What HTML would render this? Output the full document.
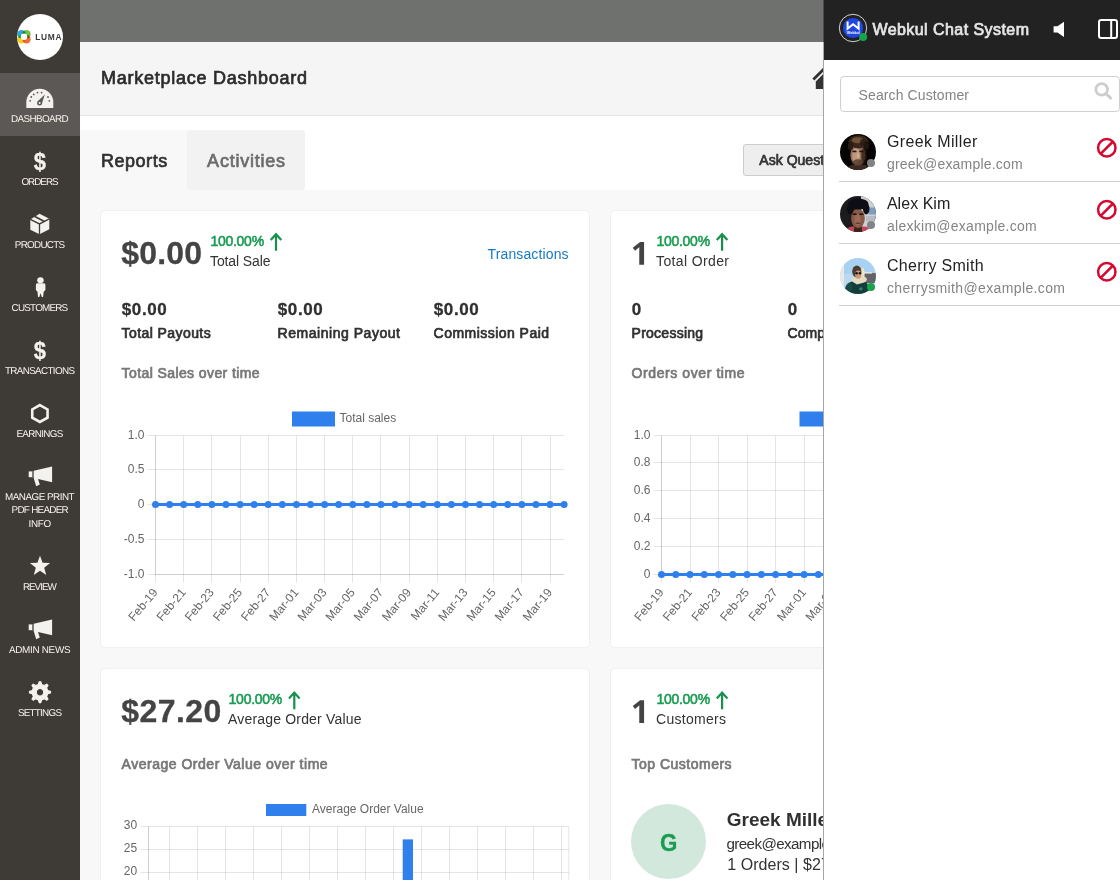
<!DOCTYPE html>
<html lang="en">
<head>
<meta charset="utf-8">
<title>Marketplace Dashboard</title>
<style>
html,body{margin:0;padding:0;}
body{width:1120px;height:880px;overflow:hidden;position:relative;background:#f8f8f8;font-family:"Liberation Sans",sans-serif;}
.layer{position:absolute;left:0;top:0;height:880px;overflow:hidden;}
.abs{position:absolute;}
.t{position:absolute;white-space:pre;line-height:1;font-family:"Liberation Sans",sans-serif;will-change:opacity;}
/* main */
#main{width:1120px;z-index:1;}
.topbar{left:80px;top:0;width:1040px;height:42px;background:#6f716f;}
.pagehead{left:80px;top:42px;width:1040px;height:73px;background:#f5f5f5;border-bottom:1px solid #e4e4e4;}
.whiteband{left:80px;top:116px;width:1040px;height:74px;background:#fff;}
.tab1{left:80px;top:130px;width:107px;height:60px;background:#f8f8f8;}
.tab2{left:187px;top:130px;width:117.5px;height:60px;background:#f2f2f2;border-radius:3px;}
.btn{left:743px;top:144px;width:180px;height:30px;background:#eee;border:1px solid #ccc;border-radius:3px;}
.card{background:#fff;border:1px solid #f0f0f0;border-radius:5px;box-sizing:border-box;}
.avatarG{left:630.75px;top:803.75px;width:75px;height:75px;border-radius:50%;background:#d2e8dd;}
svg.charts{position:absolute;left:0;top:0;will-change:opacity;}
/* sidebar */
#side{width:80px;background:#3e3a36;z-index:2;}
.active{left:0;top:73px;width:80px;height:63px;background:#5c5855;}
.logo{left:17px;top:14px;width:46px;height:46px;border-radius:50%;background:#fff;}
.dollar{will-change:opacity;position:absolute;left:0;width:80px;text-align:center;font-weight:700;font-size:24.4px;line-height:1;color:#f4f2ef;transform:scaleX(0.9);transform-origin:39.9px 0;-webkit-text-stroke:0.3px #f4f2ef;}
/* chat */
#chat{left:824px;width:296px;background:#fff;z-index:3;}
#chat .in{position:absolute;left:-824px;top:0;width:1120px;height:880px;}
.chathead{left:824px;top:0;width:296px;height:60px;background:#222;}
.search{left:840px;top:76px;width:280px;height:36px;border:1px solid #cfcfcf;border-radius:4px;box-sizing:border-box;background:#fff;}
.sep{left:839px;width:281px;height:1px;background:#cfcfcf;}
.av{width:36px;height:36px;border-radius:50%;overflow:hidden;}
.dot{width:8px;height:8px;border-radius:50%;left:867px;background:#838383;}
</style>
</head>
<body>

<!-- ================= MAIN ================= -->
<div class="layer" id="main">
  <div class="abs topbar"></div>
  <div class="abs pagehead"></div>
  <div class="abs whiteband"></div>
  <div class="abs tab1"></div>
  <div class="abs tab2"></div>
  <div class="abs btn"></div>
  <!-- home icon -->
  <svg class="abs" style="left:808px;top:62px" width="40" height="32" viewBox="808 62 40 32">
    <path d="M813.35 79.6 L828 64.95 L842.65 79.6" fill="none" stroke="#333" stroke-width="2.76"/>
    <path d="M815.8 81.5 L828 69.3 L840.2 81.5 V88.9 H815.8 Z" fill="#333"/>
  </svg>
  <div class="abs card" style="left:100px;top:210px;width:490px;height:438px"></div>
  <div class="abs card" style="left:610px;top:210px;width:490px;height:438px"></div>
  <div class="abs card" style="left:100px;top:668px;width:490px;height:438px"></div>
  <div class="abs card" style="left:610px;top:668px;width:490px;height:438px"></div>
  <div class="abs avatarG"></div>
  <!-- green arrows -->
  <svg class="abs" style="left:0;top:0" width="1120" height="880" viewBox="0 0 1120 880">
    <g fill="none" stroke="#17914b" stroke-width="2.2" stroke-linecap="butt" stroke-linejoin="miter">
      <path d="M276.0 250.8 V233.9 M270.7 240.1 L276.0 234.20000000000002 L281.3 240.1"/>
      <path d="M722.1 250.8 V233.9 M716.8000000000001 240.1 L722.1 234.20000000000002 L727.4 240.1"/>
      <path d="M294.3 709.1999999999999 V692.3 M289.0 698.5 L294.3 692.5999999999999 L299.6 698.5"/>
      <path d="M722.1 709.1999999999999 V692.3 M716.8000000000001 698.5 L722.1 692.5999999999999 L727.4 698.5"/>
    </g>
  </svg>
  <svg class="abs" style="left:0;top:0" width="1120" height="880" viewBox="0 0 1120 880"><path fill="#444" d="M644.06 264.75 L639.25 264.75 L639.25 251.53 L639.30 249.36 L639.38 246.98 Q638.17 248.19 637.70 248.56 L635.08 250.67 L632.75 247.77 L640.11 241.91 L644.08 241.91 L644.08 264.75 Z"/><path fill="#444" d="M644.06 723.00 L639.25 723.00 L639.25 709.78 L639.30 707.61 L639.38 705.23 Q638.17 706.44 637.70 706.81 L635.08 708.92 L632.75 706.02 L640.11 700.16 L644.08 700.16 L644.08 723.00 Z"/></svg>
  <svg class="charts" width="1120" height="880" viewBox="0 0 1120 880" font-family="Liberation Sans, sans-serif" font-size="12" fill="#666">
<line x1="147.50" y1="435.50" x2="564.10" y2="435.50" stroke="rgba(0,0,0,0.1)" stroke-width="1"/>
<text x="144.50" y="438.86" text-anchor="end">1.0</text>
<line x1="147.50" y1="469.50" x2="564.10" y2="469.50" stroke="rgba(0,0,0,0.1)" stroke-width="1"/>
<text x="144.50" y="472.86" text-anchor="end">0.5</text>
<line x1="147.50" y1="504.50" x2="564.10" y2="504.50" stroke="rgba(0,0,0,0.1)" stroke-width="1"/>
<text x="144.50" y="507.86" text-anchor="end">0</text>
<line x1="147.50" y1="539.50" x2="564.10" y2="539.50" stroke="rgba(0,0,0,0.1)" stroke-width="1"/>
<text x="144.50" y="542.86" text-anchor="end">-0.5</text>
<line x1="147.50" y1="574.50" x2="564.10" y2="574.50" stroke="rgba(0,0,0,0.1)" stroke-width="1"/>
<text x="144.50" y="577.86" text-anchor="end">-1.0</text>
<line x1="155.50" y1="435.50" x2="155.50" y2="582.50" stroke="rgba(0,0,0,0.1)" stroke-width="1"/>
<line x1="183.50" y1="435.50" x2="183.50" y2="582.50" stroke="rgba(0,0,0,0.1)" stroke-width="1"/>
<line x1="211.50" y1="435.50" x2="211.50" y2="582.50" stroke="rgba(0,0,0,0.1)" stroke-width="1"/>
<line x1="240.50" y1="435.50" x2="240.50" y2="582.50" stroke="rgba(0,0,0,0.1)" stroke-width="1"/>
<line x1="268.50" y1="435.50" x2="268.50" y2="582.50" stroke="rgba(0,0,0,0.1)" stroke-width="1"/>
<line x1="296.50" y1="435.50" x2="296.50" y2="582.50" stroke="rgba(0,0,0,0.1)" stroke-width="1"/>
<line x1="324.50" y1="435.50" x2="324.50" y2="582.50" stroke="rgba(0,0,0,0.1)" stroke-width="1"/>
<line x1="352.50" y1="435.50" x2="352.50" y2="582.50" stroke="rgba(0,0,0,0.1)" stroke-width="1"/>
<line x1="380.50" y1="435.50" x2="380.50" y2="582.50" stroke="rgba(0,0,0,0.1)" stroke-width="1"/>
<line x1="409.50" y1="435.50" x2="409.50" y2="582.50" stroke="rgba(0,0,0,0.1)" stroke-width="1"/>
<line x1="437.50" y1="435.50" x2="437.50" y2="582.50" stroke="rgba(0,0,0,0.1)" stroke-width="1"/>
<line x1="465.50" y1="435.50" x2="465.50" y2="582.50" stroke="rgba(0,0,0,0.1)" stroke-width="1"/>
<line x1="493.50" y1="435.50" x2="493.50" y2="582.50" stroke="rgba(0,0,0,0.1)" stroke-width="1"/>
<line x1="521.50" y1="435.50" x2="521.50" y2="582.50" stroke="rgba(0,0,0,0.1)" stroke-width="1"/>
<line x1="550.50" y1="435.50" x2="550.50" y2="582.50" stroke="rgba(0,0,0,0.1)" stroke-width="1"/>
<line x1="155.50" y1="435.50" x2="155.50" y2="574.50" stroke="rgba(0,0,0,0.1)" stroke-width="1"/>
<line x1="155.50" y1="574.50" x2="564.10" y2="574.50" stroke="rgba(0,0,0,0.1)" stroke-width="1"/>
<line x1="155.50" y1="504.50" x2="564.10" y2="504.50" stroke="rgba(0,0,0,0.25)" stroke-width="1"/>
<line x1="155.50" y1="504.50" x2="564.10" y2="504.50" stroke="#2f80ed" stroke-width="3"/>
<circle cx="155.50" cy="504.50" r="3.5" fill="#2f80ed"/>
<circle cx="169.59" cy="504.50" r="3.5" fill="#2f80ed"/>
<circle cx="183.68" cy="504.50" r="3.5" fill="#2f80ed"/>
<circle cx="197.77" cy="504.50" r="3.5" fill="#2f80ed"/>
<circle cx="211.86" cy="504.50" r="3.5" fill="#2f80ed"/>
<circle cx="225.95" cy="504.50" r="3.5" fill="#2f80ed"/>
<circle cx="240.04" cy="504.50" r="3.5" fill="#2f80ed"/>
<circle cx="254.13" cy="504.50" r="3.5" fill="#2f80ed"/>
<circle cx="268.22" cy="504.50" r="3.5" fill="#2f80ed"/>
<circle cx="282.31" cy="504.50" r="3.5" fill="#2f80ed"/>
<circle cx="296.40" cy="504.50" r="3.5" fill="#2f80ed"/>
<circle cx="310.49" cy="504.50" r="3.5" fill="#2f80ed"/>
<circle cx="324.58" cy="504.50" r="3.5" fill="#2f80ed"/>
<circle cx="338.67" cy="504.50" r="3.5" fill="#2f80ed"/>
<circle cx="352.76" cy="504.50" r="3.5" fill="#2f80ed"/>
<circle cx="366.84" cy="504.50" r="3.5" fill="#2f80ed"/>
<circle cx="380.93" cy="504.50" r="3.5" fill="#2f80ed"/>
<circle cx="395.02" cy="504.50" r="3.5" fill="#2f80ed"/>
<circle cx="409.11" cy="504.50" r="3.5" fill="#2f80ed"/>
<circle cx="423.20" cy="504.50" r="3.5" fill="#2f80ed"/>
<circle cx="437.29" cy="504.50" r="3.5" fill="#2f80ed"/>
<circle cx="451.38" cy="504.50" r="3.5" fill="#2f80ed"/>
<circle cx="465.47" cy="504.50" r="3.5" fill="#2f80ed"/>
<circle cx="479.56" cy="504.50" r="3.5" fill="#2f80ed"/>
<circle cx="493.65" cy="504.50" r="3.5" fill="#2f80ed"/>
<circle cx="507.74" cy="504.50" r="3.5" fill="#2f80ed"/>
<circle cx="521.83" cy="504.50" r="3.5" fill="#2f80ed"/>
<circle cx="535.92" cy="504.50" r="3.5" fill="#2f80ed"/>
<circle cx="550.01" cy="504.50" r="3.5" fill="#2f80ed"/>
<circle cx="564.10" cy="504.50" r="3.5" fill="#2f80ed"/>
<text transform="translate(155.10 590.00) rotate(-50)" x="0" y="4.16" text-anchor="end">Feb-19</text>
<text transform="translate(183.28 590.00) rotate(-50)" x="0" y="4.16" text-anchor="end">Feb-21</text>
<text transform="translate(211.46 590.00) rotate(-50)" x="0" y="4.16" text-anchor="end">Feb-23</text>
<text transform="translate(239.64 590.00) rotate(-50)" x="0" y="4.16" text-anchor="end">Feb-25</text>
<text transform="translate(267.82 590.00) rotate(-50)" x="0" y="4.16" text-anchor="end">Feb-27</text>
<text transform="translate(296.00 590.00) rotate(-50)" x="0" y="4.16" text-anchor="end">Mar-01</text>
<text transform="translate(324.18 590.00) rotate(-50)" x="0" y="4.16" text-anchor="end">Mar-03</text>
<text transform="translate(352.36 590.00) rotate(-50)" x="0" y="4.16" text-anchor="end">Mar-05</text>
<text transform="translate(380.53 590.00) rotate(-50)" x="0" y="4.16" text-anchor="end">Mar-07</text>
<text transform="translate(408.71 590.00) rotate(-50)" x="0" y="4.16" text-anchor="end">Mar-09</text>
<text transform="translate(436.89 590.00) rotate(-50)" x="0" y="4.16" text-anchor="end">Mar-11</text>
<text transform="translate(465.07 590.00) rotate(-50)" x="0" y="4.16" text-anchor="end">Mar-13</text>
<text transform="translate(493.25 590.00) rotate(-50)" x="0" y="4.16" text-anchor="end">Mar-15</text>
<text transform="translate(521.43 590.00) rotate(-50)" x="0" y="4.16" text-anchor="end">Mar-17</text>
<text transform="translate(549.61 590.00) rotate(-50)" x="0" y="4.16" text-anchor="end">Mar-19</text>
<rect x="292.00" y="411.5" width="43" height="15" fill="#2f80ed"/>
<text x="339.50" y="422.36" text-anchor="start">Total sales</text>
<line x1="653.50" y1="435.50" x2="1075.00" y2="435.50" stroke="rgba(0,0,0,0.1)" stroke-width="1"/>
<text x="650.50" y="438.86" text-anchor="end">1.0</text>
<line x1="653.50" y1="462.50" x2="1075.00" y2="462.50" stroke="rgba(0,0,0,0.1)" stroke-width="1"/>
<text x="650.50" y="465.86" text-anchor="end">0.8</text>
<line x1="653.50" y1="490.50" x2="1075.00" y2="490.50" stroke="rgba(0,0,0,0.1)" stroke-width="1"/>
<text x="650.50" y="493.86" text-anchor="end">0.6</text>
<line x1="653.50" y1="518.50" x2="1075.00" y2="518.50" stroke="rgba(0,0,0,0.1)" stroke-width="1"/>
<text x="650.50" y="521.86" text-anchor="end">0.4</text>
<line x1="653.50" y1="546.50" x2="1075.00" y2="546.50" stroke="rgba(0,0,0,0.1)" stroke-width="1"/>
<text x="650.50" y="549.86" text-anchor="end">0.2</text>
<line x1="653.50" y1="574.50" x2="1075.00" y2="574.50" stroke="rgba(0,0,0,0.1)" stroke-width="1"/>
<text x="650.50" y="577.86" text-anchor="end">0</text>
<line x1="661.50" y1="435.50" x2="661.50" y2="582.50" stroke="rgba(0,0,0,0.1)" stroke-width="1"/>
<line x1="690.50" y1="435.50" x2="690.50" y2="582.50" stroke="rgba(0,0,0,0.1)" stroke-width="1"/>
<line x1="718.50" y1="435.50" x2="718.50" y2="582.50" stroke="rgba(0,0,0,0.1)" stroke-width="1"/>
<line x1="747.50" y1="435.50" x2="747.50" y2="582.50" stroke="rgba(0,0,0,0.1)" stroke-width="1"/>
<line x1="775.50" y1="435.50" x2="775.50" y2="582.50" stroke="rgba(0,0,0,0.1)" stroke-width="1"/>
<line x1="804.50" y1="435.50" x2="804.50" y2="582.50" stroke="rgba(0,0,0,0.1)" stroke-width="1"/>
<line x1="832.50" y1="435.50" x2="832.50" y2="582.50" stroke="rgba(0,0,0,0.1)" stroke-width="1"/>
<line x1="861.50" y1="435.50" x2="861.50" y2="582.50" stroke="rgba(0,0,0,0.1)" stroke-width="1"/>
<line x1="889.50" y1="435.50" x2="889.50" y2="582.50" stroke="rgba(0,0,0,0.1)" stroke-width="1"/>
<line x1="918.50" y1="435.50" x2="918.50" y2="582.50" stroke="rgba(0,0,0,0.1)" stroke-width="1"/>
<line x1="946.50" y1="435.50" x2="946.50" y2="582.50" stroke="rgba(0,0,0,0.1)" stroke-width="1"/>
<line x1="975.50" y1="435.50" x2="975.50" y2="582.50" stroke="rgba(0,0,0,0.1)" stroke-width="1"/>
<line x1="1003.50" y1="435.50" x2="1003.50" y2="582.50" stroke="rgba(0,0,0,0.1)" stroke-width="1"/>
<line x1="1032.50" y1="435.50" x2="1032.50" y2="582.50" stroke="rgba(0,0,0,0.1)" stroke-width="1"/>
<line x1="1060.50" y1="435.50" x2="1060.50" y2="582.50" stroke="rgba(0,0,0,0.1)" stroke-width="1"/>
<line x1="661.50" y1="435.50" x2="661.50" y2="574.50" stroke="rgba(0,0,0,0.1)" stroke-width="1"/>
<line x1="661.50" y1="574.50" x2="1075.00" y2="574.50" stroke="rgba(0,0,0,0.1)" stroke-width="1"/>
<line x1="661.50" y1="574.50" x2="1075.00" y2="574.50" stroke="rgba(0,0,0,0.25)" stroke-width="1"/>
<line x1="661.50" y1="574.50" x2="1075.00" y2="574.50" stroke="#2f80ed" stroke-width="3"/>
<circle cx="661.50" cy="574.50" r="3.5" fill="#2f80ed"/>
<circle cx="675.76" cy="574.50" r="3.5" fill="#2f80ed"/>
<circle cx="690.02" cy="574.50" r="3.5" fill="#2f80ed"/>
<circle cx="704.28" cy="574.50" r="3.5" fill="#2f80ed"/>
<circle cx="718.53" cy="574.50" r="3.5" fill="#2f80ed"/>
<circle cx="732.79" cy="574.50" r="3.5" fill="#2f80ed"/>
<circle cx="747.05" cy="574.50" r="3.5" fill="#2f80ed"/>
<circle cx="761.31" cy="574.50" r="3.5" fill="#2f80ed"/>
<circle cx="775.57" cy="574.50" r="3.5" fill="#2f80ed"/>
<circle cx="789.83" cy="574.50" r="3.5" fill="#2f80ed"/>
<circle cx="804.09" cy="574.50" r="3.5" fill="#2f80ed"/>
<circle cx="818.34" cy="574.50" r="3.5" fill="#2f80ed"/>
<circle cx="832.60" cy="574.50" r="3.5" fill="#2f80ed"/>
<circle cx="846.86" cy="574.50" r="3.5" fill="#2f80ed"/>
<circle cx="861.12" cy="574.50" r="3.5" fill="#2f80ed"/>
<circle cx="875.38" cy="574.50" r="3.5" fill="#2f80ed"/>
<circle cx="889.64" cy="574.50" r="3.5" fill="#2f80ed"/>
<circle cx="903.90" cy="574.50" r="3.5" fill="#2f80ed"/>
<circle cx="918.16" cy="574.50" r="3.5" fill="#2f80ed"/>
<circle cx="932.41" cy="574.50" r="3.5" fill="#2f80ed"/>
<circle cx="946.67" cy="574.50" r="3.5" fill="#2f80ed"/>
<circle cx="960.93" cy="574.50" r="3.5" fill="#2f80ed"/>
<circle cx="975.19" cy="574.50" r="3.5" fill="#2f80ed"/>
<circle cx="989.45" cy="574.50" r="3.5" fill="#2f80ed"/>
<circle cx="1003.71" cy="574.50" r="3.5" fill="#2f80ed"/>
<circle cx="1017.97" cy="574.50" r="3.5" fill="#2f80ed"/>
<circle cx="1032.22" cy="574.50" r="3.5" fill="#2f80ed"/>
<circle cx="1046.48" cy="574.50" r="3.5" fill="#2f80ed"/>
<circle cx="1060.74" cy="574.50" r="3.5" fill="#2f80ed"/>
<circle cx="1075.00" cy="574.50" r="3.5" fill="#2f80ed"/>
<text transform="translate(661.10 590.00) rotate(-50)" x="0" y="4.16" text-anchor="end">Feb-19</text>
<text transform="translate(689.62 590.00) rotate(-50)" x="0" y="4.16" text-anchor="end">Feb-21</text>
<text transform="translate(718.13 590.00) rotate(-50)" x="0" y="4.16" text-anchor="end">Feb-23</text>
<text transform="translate(746.65 590.00) rotate(-50)" x="0" y="4.16" text-anchor="end">Feb-25</text>
<text transform="translate(775.17 590.00) rotate(-50)" x="0" y="4.16" text-anchor="end">Feb-27</text>
<text transform="translate(803.69 590.00) rotate(-50)" x="0" y="4.16" text-anchor="end">Mar-01</text>
<text transform="translate(832.20 590.00) rotate(-50)" x="0" y="4.16" text-anchor="end">Mar-03</text>
<text transform="translate(860.72 590.00) rotate(-50)" x="0" y="4.16" text-anchor="end">Mar-05</text>
<text transform="translate(889.24 590.00) rotate(-50)" x="0" y="4.16" text-anchor="end">Mar-07</text>
<text transform="translate(917.76 590.00) rotate(-50)" x="0" y="4.16" text-anchor="end">Mar-09</text>
<text transform="translate(946.27 590.00) rotate(-50)" x="0" y="4.16" text-anchor="end">Mar-11</text>
<text transform="translate(974.79 590.00) rotate(-50)" x="0" y="4.16" text-anchor="end">Mar-13</text>
<text transform="translate(1003.31 590.00) rotate(-50)" x="0" y="4.16" text-anchor="end">Mar-15</text>
<text transform="translate(1031.82 590.00) rotate(-50)" x="0" y="4.16" text-anchor="end">Mar-17</text>
<text transform="translate(1060.34 590.00) rotate(-50)" x="0" y="4.16" text-anchor="end">Mar-19</text>
<rect x="799.50" y="411.5" width="43" height="15" fill="#2f80ed"/>
<text x="847.00" y="422.36" text-anchor="start">Total orders</text>
<line x1="140.50" y1="826.50" x2="568.75" y2="826.50" stroke="rgba(0,0,0,0.1)" stroke-width="1"/>
<text x="137.20" y="829.06" text-anchor="end">30</text>
<line x1="140.50" y1="849.50" x2="568.75" y2="849.50" stroke="rgba(0,0,0,0.1)" stroke-width="1"/>
<text x="137.20" y="852.06" text-anchor="end">25</text>
<line x1="140.50" y1="872.50" x2="568.75" y2="872.50" stroke="rgba(0,0,0,0.1)" stroke-width="1"/>
<text x="137.20" y="875.06" text-anchor="end">20</text>
<line x1="148.50" y1="826.50" x2="148.50" y2="890.00" stroke="rgba(0,0,0,0.1)" stroke-width="1"/>
<line x1="148.50" y1="826.50" x2="148.50" y2="890.00" stroke="rgba(0,0,0,0.1)" stroke-width="1"/>
<line x1="169.50" y1="826.50" x2="169.50" y2="890.00" stroke="rgba(0,0,0,0.1)" stroke-width="1"/>
<line x1="197.50" y1="826.50" x2="197.50" y2="890.00" stroke="rgba(0,0,0,0.1)" stroke-width="1"/>
<line x1="225.50" y1="826.50" x2="225.50" y2="890.00" stroke="rgba(0,0,0,0.1)" stroke-width="1"/>
<line x1="253.50" y1="826.50" x2="253.50" y2="890.00" stroke="rgba(0,0,0,0.1)" stroke-width="1"/>
<line x1="281.50" y1="826.50" x2="281.50" y2="890.00" stroke="rgba(0,0,0,0.1)" stroke-width="1"/>
<line x1="309.50" y1="826.50" x2="309.50" y2="890.00" stroke="rgba(0,0,0,0.1)" stroke-width="1"/>
<line x1="337.50" y1="826.50" x2="337.50" y2="890.00" stroke="rgba(0,0,0,0.1)" stroke-width="1"/>
<line x1="365.50" y1="826.50" x2="365.50" y2="890.00" stroke="rgba(0,0,0,0.1)" stroke-width="1"/>
<line x1="393.50" y1="826.50" x2="393.50" y2="890.00" stroke="rgba(0,0,0,0.1)" stroke-width="1"/>
<line x1="421.50" y1="826.50" x2="421.50" y2="890.00" stroke="rgba(0,0,0,0.1)" stroke-width="1"/>
<line x1="449.50" y1="826.50" x2="449.50" y2="890.00" stroke="rgba(0,0,0,0.1)" stroke-width="1"/>
<line x1="477.50" y1="826.50" x2="477.50" y2="890.00" stroke="rgba(0,0,0,0.1)" stroke-width="1"/>
<line x1="505.50" y1="826.50" x2="505.50" y2="890.00" stroke="rgba(0,0,0,0.1)" stroke-width="1"/>
<line x1="533.50" y1="826.50" x2="533.50" y2="890.00" stroke="rgba(0,0,0,0.1)" stroke-width="1"/>
<line x1="561.50" y1="826.50" x2="561.50" y2="890.00" stroke="rgba(0,0,0,0.1)" stroke-width="1"/>
<line x1="568.75" y1="826.50" x2="568.75" y2="890.00" stroke="rgba(0,0,0,0.1)" stroke-width="1"/>
<rect x="402.7" y="839.38" width="10.30" height="60" fill="#2f80ed"/>
<rect x="266" y="804" width="40.3" height="12" fill="#2f80ed"/>
<text x="312.00" y="813.36" text-anchor="start">Average Order Value</text>
</svg>
<span class="t" style="left:101.10px;top:68.66px;font-size:18px;font-weight:400;color:#2c2c2c;letter-spacing:0.740px;-webkit-text-stroke:0.70px #2c2c2c;">Marketplace Dashboard</span>
<span class="t" style="left:100.90px;top:151.56px;font-size:18px;font-weight:400;color:#303030;letter-spacing:0.545px;-webkit-text-stroke:0.70px #303030;">Reports</span>
<span class="t" style="left:207.10px;top:151.56px;font-size:18px;font-weight:400;color:#6c6c6c;letter-spacing:0.776px;-webkit-text-stroke:0.70px #6c6c6c;">Activities</span>
<span class="t" style="left:759.30px;top:152.95px;font-size:14px;font-weight:400;color:#333;letter-spacing:0.028px;-webkit-text-stroke:0.70px #333;">Ask Question to Admin</span>
<span class="t" style="left:121.30px;top:237.41px;font-size:32px;font-weight:700;color:#444;letter-spacing:0.155px;-webkit-text-stroke:0.3px #444;">$0.00</span>
<span class="t" style="left:210.40px;top:234.15px;font-size:14px;font-weight:400;color:#1a9c52;letter-spacing:-0.264px;-webkit-text-stroke:0.55px #1a9c52;">100.00%</span>
<span class="t" style="left:210.00px;top:254.15px;font-size:14px;font-weight:400;color:#333;letter-spacing:-0.109px;">Total Sale</span>
<span class="t" style="left:487.50px;top:247.35px;font-size:14px;font-weight:400;color:#1979c3;letter-spacing:0.134px;">Transactions</span>
<span class="t" style="left:121.80px;top:301.01px;font-size:17px;font-weight:700;color:#303030;letter-spacing:0.613px;-webkit-text-stroke:0.3px #303030;">$0.00</span>
<span class="t" style="left:277.80px;top:301.01px;font-size:17px;font-weight:700;color:#303030;letter-spacing:0.613px;-webkit-text-stroke:0.3px #303030;">$0.00</span>
<span class="t" style="left:433.80px;top:301.01px;font-size:17px;font-weight:700;color:#303030;letter-spacing:0.613px;-webkit-text-stroke:0.3px #303030;">$0.00</span>
<span class="t" style="left:121.60px;top:325.75px;font-size:14px;font-weight:400;color:#303030;letter-spacing:0.420px;-webkit-text-stroke:0.70px #303030;">Total Payouts</span>
<span class="t" style="left:277.60px;top:325.75px;font-size:14px;font-weight:400;color:#303030;letter-spacing:0.533px;-webkit-text-stroke:0.70px #303030;">Remaining Payout</span>
<span class="t" style="left:433.60px;top:325.75px;font-size:14px;font-weight:400;color:#303030;letter-spacing:0.462px;-webkit-text-stroke:0.70px #303030;">Commission Paid</span>
<span class="t" style="left:121.60px;top:366.05px;font-size:14px;font-weight:400;color:#777;letter-spacing:0.402px;-webkit-text-stroke:0.70px #777;">Total Sales over time</span>
<span class="t" style="left:656.40px;top:234.15px;font-size:14px;font-weight:400;color:#1a9c52;letter-spacing:-0.264px;-webkit-text-stroke:0.55px #1a9c52;">100.00%</span>
<span class="t" style="left:656.00px;top:254.15px;font-size:14px;font-weight:400;color:#333;letter-spacing:0.375px;">Total Order</span>
<span class="t" style="left:631.80px;top:301.01px;font-size:17px;font-weight:700;color:#303030;-webkit-text-stroke:0.3px #303030;">0</span>
<span class="t" style="left:787.80px;top:301.01px;font-size:17px;font-weight:700;color:#303030;-webkit-text-stroke:0.3px #303030;">0</span>
<span class="t" style="left:631.60px;top:325.75px;font-size:14px;font-weight:400;color:#303030;letter-spacing:0.248px;-webkit-text-stroke:0.70px #303030;">Processing</span>
<span class="t" style="left:787.60px;top:325.75px;font-size:14px;font-weight:400;color:#303030;-webkit-text-stroke:0.70px #303030;">Completed</span>
<span class="t" style="left:631.60px;top:366.05px;font-size:14px;font-weight:400;color:#777;letter-spacing:0.583px;-webkit-text-stroke:0.70px #777;">Orders over time</span>
<span class="t" style="left:121.30px;top:695.41px;font-size:32px;font-weight:700;color:#444;letter-spacing:0.425px;-webkit-text-stroke:0.3px #444;">$27.20</span>
<span class="t" style="left:228.60px;top:692.15px;font-size:14px;font-weight:400;color:#1a9c52;letter-spacing:-0.264px;-webkit-text-stroke:0.55px #1a9c52;">100.00%</span>
<span class="t" style="left:228.00px;top:712.15px;font-size:14px;font-weight:400;color:#333;letter-spacing:0.181px;">Average Order Value</span>
<span class="t" style="left:121.60px;top:757.05px;font-size:14px;font-weight:400;color:#777;letter-spacing:0.511px;-webkit-text-stroke:0.70px #777;">Average Order Value over time</span>
<span class="t" style="left:656.40px;top:692.15px;font-size:14px;font-weight:400;color:#1a9c52;letter-spacing:-0.264px;-webkit-text-stroke:0.55px #1a9c52;">100.00%</span>
<span class="t" style="left:656.00px;top:712.15px;font-size:14px;font-weight:400;color:#333;letter-spacing:0.289px;">Customers</span>
<span class="t" style="left:631.60px;top:757.05px;font-size:14px;font-weight:400;color:#777;letter-spacing:0.487px;-webkit-text-stroke:0.70px #777;">Top Customers</span>
<span class="t" style="left:660.30px;top:830.58px;font-size:24px;font-weight:700;color:#1a9c52;transform:scaleX(0.93);transform-origin:0 0;-webkit-text-stroke:0.3px #1a9c52;">G</span>
<span class="t" style="left:726.75px;top:810.17px;font-size:19px;font-weight:700;color:#303030;">Greek Miller</span>
<span class="t" style="left:726.50px;top:835.93px;font-size:15.2px;font-weight:400;color:#333;letter-spacing:-0.616px;">greek@example.com</span>
<span class="t" style="left:727.30px;top:856.76px;font-size:16px;font-weight:400;color:#333;letter-spacing:0.042px;">1 Orders | $27.20</span>
  <div class="abs" style="left:823px;top:42px;width:1px;height:838px;background:#a6a6a6"></div>
  <div class="abs" style="left:823px;top:0;width:1px;height:42px;background:#4a4b4a"></div>
</div>

<!-- ================= SIDEBAR ================= -->
<div class="layer" id="side">
  <div class="abs active"></div>
  <div class="abs logo"></div>
  <svg class="abs" style="left:0;top:0" width="80" height="880" viewBox="0 0 80 880">
    <!-- luma logo ring -->
    <g style="mix-blend-mode:multiply">
      <circle cx="21.5" cy="39.3" r="4.2" fill="#f6d21c" style="mix-blend-mode:multiply"/>
      <circle cx="21.5" cy="34.3" r="4.2" fill="#2ba6de" style="mix-blend-mode:multiply"/>
      <circle cx="26.5" cy="34.3" r="4.2" fill="#74bf44" style="mix-blend-mode:multiply"/>
      <circle cx="26.5" cy="39.3" r="4.2" fill="#f26c3b" style="mix-blend-mode:multiply"/>
    </g>
    <circle cx="24" cy="36.8" r="3.3" fill="#fff"/>
    <g fill="#f4f2ef">
      <!-- dashboard gauge -->
      <path d="M26.3 107.9 V102.3 A13.5 13.5 0 0 1 53.3 102.3 V107.9 Z"/>
      <g fill="#5c5855">
        <circle cx="30.2" cy="100.8" r="0.9"/><circle cx="31.25" cy="97" r="0.9"/><circle cx="33.75" cy="94.4" r="0.9"/><circle cx="37.5" cy="92.6" r="0.9"/><circle cx="41.6" cy="92.6" r="0.9"/><circle cx="48" cy="97" r="0.9"/><circle cx="49.3" cy="100.8" r="0.9"/>
        <path d="M44.8 94.4 L41.73 104.20 L37.47 101.60 Z"/><circle cx="39.6" cy="102.9" r="2.5"/>
      </g>
      <circle cx="39.6" cy="102.9" r="1"/>
      <!-- products box -->
      <path d="M39.5 213.7 L49.3 218.8 V229.2 L39.5 234.3 L30.3 229.7 V219.4 Z"/>
      <path d="M30.3 219.4 L39.5 223.9 L49.3 218.8 M39.5 223.9 V234.3" fill="none" stroke="#3e3a36" stroke-width="1.3"/>
      <path d="M34.9 216.6 L44.4 221.4" fill="none" stroke="#3e3a36" stroke-width="1.7"/>
      <!-- customers person -->
      <ellipse cx="40.45" cy="280.2" rx="3.25" ry="3.05"/>
      <path d="M35.9 284.8 Q35.9 283.3 37.3 283.3 H44 Q45.4 283.3 45.4 284.8 V290 L43.7 291.8 L43.1 297 H41.8 L40.55 293.2 L39.3 297 H38 L37.5 291.8 L35.9 290 Z"/>
      <!-- earnings hexagon -->
      <path d="M39.9 405.1 L47.55 409.4 V417.7 L39.9 422 L32.25 417.7 V409.4 Z" fill="none" stroke="#f4f2ef" stroke-width="2.6"/>
      <!-- megaphones -->
      <g id="mega">
        <path d="M33.75 470.7 L52.1 466.6 V482.2 L38 478.9 L39.8 484.6 L36.2 486.3 L33.75 478.2 Z"/>
        <rect x="28.7" y="471.4" width="3.4" height="5.8"/>
        <rect x="32.1" y="471.2" width="1.65" height="6.4" fill="#85817c"/>
      </g>
      <use href="#mega" y="153"/>
      <!-- star -->
      <path d="M40.00 555.80 L42.59 562.84 L50.08 563.12 L44.18 567.76 L46.23 574.98 L40.00 570.80 L33.77 574.98 L35.82 567.76 L29.92 563.12 L37.41 562.84 Z"/>
      <!-- gear -->
      <path d="M38.46 684.45 L39.18 681.73 L40.82 681.73 L41.54 684.45 L44.39 685.63 L46.82 684.22 L47.98 685.38 L46.57 687.81 L47.75 690.66 L50.47 691.38 L50.47 693.02 L47.75 693.74 L46.57 696.59 L47.98 699.02 L46.82 700.18 L44.39 698.77 L41.54 699.95 L40.82 702.67 L39.18 702.67 L38.46 699.95 L35.61 698.77 L33.18 700.18 L32.02 699.02 L33.43 696.59 L32.25 693.74 L29.53 693.02 L29.53 691.38 L32.25 690.66 L33.43 687.81 L32.02 685.38 L33.18 684.22 L35.61 685.63 Z M43.80 692.20 A3.8 3.8 0 1 0 36.20 692.20 A3.8 3.8 0 1 0 43.80 692.20 Z" fill-rule="evenodd" stroke="#f4f2ef" stroke-width="1.2" stroke-linejoin="round"/>
    </g>
  </svg>
  <div class="dollar" style="top:150px">$</div>
  <div class="dollar" style="top:339px">$</div>
<span class="t" style="left:11.10px;top:114.72px;font-size:9.9px;font-weight:400;color:#f7f3eb;letter-spacing:-0.614px;text-rendering:geometricPrecision;">DASHBOARD</span>
<span class="t" style="left:21.40px;top:177.72px;font-size:9.9px;font-weight:400;color:#f7f3eb;letter-spacing:-1.010px;text-rendering:geometricPrecision;">ORDERS</span>
<span class="t" style="left:14.80px;top:240.72px;font-size:9.9px;font-weight:400;color:#f7f3eb;letter-spacing:-0.717px;text-rendering:geometricPrecision;">PRODUCTS</span>
<span class="t" style="left:11.60px;top:303.72px;font-size:9.9px;font-weight:400;color:#f7f3eb;letter-spacing:-0.790px;text-rendering:geometricPrecision;">CUSTOMERS</span>
<span class="t" style="left:5.00px;top:366.72px;font-size:9.9px;font-weight:400;color:#f7f3eb;letter-spacing:-0.670px;text-rendering:geometricPrecision;">TRANSACTIONS</span>
<span class="t" style="left:16.40px;top:429.72px;font-size:9.9px;font-weight:400;color:#f7f3eb;letter-spacing:-0.656px;text-rendering:geometricPrecision;">EARNINGS</span>
<span class="t" style="left:5.00px;top:493.02px;font-size:9.9px;font-weight:400;color:#f7f3eb;letter-spacing:-0.507px;text-rendering:geometricPrecision;">MANAGE PRINT</span>
<span class="t" style="left:11.60px;top:505.62px;font-size:9.9px;font-weight:400;color:#f7f3eb;letter-spacing:-0.723px;text-rendering:geometricPrecision;">PDF HEADER</span>
<span class="t" style="left:28.60px;top:519.82px;font-size:9.9px;font-weight:400;color:#f7f3eb;letter-spacing:-0.315px;text-rendering:geometricPrecision;">INFO</span>
<span class="t" style="left:22.90px;top:582.72px;font-size:9.9px;font-weight:400;color:#f7f3eb;letter-spacing:-1.014px;text-rendering:geometricPrecision;">REVIEW</span>
<span class="t" style="left:8.90px;top:645.72px;font-size:9.9px;font-weight:400;color:#f7f3eb;letter-spacing:-0.287px;text-rendering:geometricPrecision;">ADMIN NEWS</span>
<span class="t" style="left:17.90px;top:708.72px;font-size:9.9px;font-weight:400;color:#f7f3eb;letter-spacing:-0.756px;text-rendering:geometricPrecision;">SETTINGS</span>
<span class="t" style="left:35.20px;top:32.79px;font-size:8.4px;font-weight:700;color:#3a3a3a;letter-spacing:0.699px;">LUMA</span>
</div>

<!-- ================= CHAT ================= -->
<div class="layer" id="chat"><div class="in">
    <div class="abs chathead"></div>
  <div class="abs search"></div>
  <div class="abs sep" style="top:181px"></div>
  <div class="abs sep" style="top:243px"></div>
  <div class="abs sep" style="top:305px"></div>
  <svg class="abs av" style="top:134px;left:840px" viewBox="0 0 36 36"><defs><filter id="b1" x="-10%" y="-10%" width="120%" height="120%"><feGaussianBlur stdDeviation="0.55"/></filter></defs>
<rect width="36" height="36" fill="#060504"/>
<g filter="url(#b1)">
<path d="M5 38 Q9 29.5 15 31 L21.5 31 Q28 29.5 31 38 Z" fill="#3b2a20"/>
<ellipse cx="18" cy="21" rx="7.6" ry="10.6" fill="#96705a"/>
<ellipse cx="16.2" cy="21.5" rx="4" ry="8.6" fill="#c69d84" opacity=".85"/>
<ellipse cx="24.3" cy="22" rx="3" ry="9" fill="#1e130d" opacity=".7"/>
<ellipse cx="18" cy="28.6" rx="5.6" ry="3.4" fill="#4d3628" opacity=".75"/>
<ellipse cx="18.6" cy="7.8" rx="10" ry="6.6" fill="#3a281a"/>
<ellipse cx="10.6" cy="12" rx="2.6" ry="4.2" fill="#2b1d13"/>
<ellipse cx="26.4" cy="11.5" rx="2.6" ry="4.2" fill="#1d140e"/>
<ellipse cx="17.5" cy="6.2" rx="5.6" ry="3" fill="#7a573a" opacity=".9"/>
<ellipse cx="23" cy="8.5" rx="3" ry="3.4" fill="#2a1c12" opacity=".8"/>
<ellipse cx="14.4" cy="17.4" rx="2.3" ry="0.9" fill="#2a1910"/>
<ellipse cx="21.4" cy="17.4" rx="2.3" ry="0.9" fill="#24150d"/>
<ellipse cx="17.9" cy="21.5" rx="1" ry="2.6" fill="#dcb79f" opacity=".8"/>
</g></svg>
<svg class="abs av" style="top:196px;left:840px" viewBox="0 0 36 36"><defs><filter id="b2" x="-10%" y="-10%" width="120%" height="120%"><feGaussianBlur stdDeviation="0.55"/></filter></defs>
<rect width="36" height="36" fill="#1b1b1d"/>
<g filter="url(#b2)">
<rect x="21" y="-2" width="17" height="40" fill="#cdd1d6"/>
<rect x="28.5" y="11.5" width="9" height="7" fill="#7f9dbb"/>
<rect x="26" y="20" width="12" height="5" fill="#b7bcc2"/>
<path d="M7 38 L8.5 31.5 Q11 30 14 30.5 L22 30.5 Q26 30 28.5 31.5 L30 38 Z" fill="#c9455b"/>
<path d="M13.5 38 L14.5 30 L21.5 30 L22.5 38 Z" fill="#3a221c"/>
<ellipse cx="18" cy="22.4" rx="6.8" ry="9.8" fill="#875a46"/>
<ellipse cx="17.6" cy="24" rx="3.2" ry="6" fill="#a3705a" opacity=".7"/>
<ellipse cx="18.3" cy="8" rx="10.2" ry="5.6" fill="#111012"/>
<ellipse cx="10.2" cy="12.8" rx="3.3" ry="5.4" fill="#111012"/>
<ellipse cx="26.2" cy="12.8" rx="3.3" ry="5.6" fill="#111012"/>
<ellipse cx="14.6" cy="18.2" rx="2.3" ry="0.9" fill="#24130e"/>
<ellipse cx="21.4" cy="18.2" rx="2.3" ry="0.9" fill="#24130e"/>
<ellipse cx="18" cy="27.3" rx="2.6" ry="0.7" fill="#5e392c"/>
</g></svg>
<svg class="abs av" style="top:258px;left:840px" viewBox="0 0 36 36"><defs><filter id="b3" x="-10%" y="-10%" width="120%" height="120%"><feGaussianBlur stdDeviation="0.55"/></filter></defs>
<rect width="36" height="36" fill="#a9d2f2"/>
<g filter="url(#b3)">
<rect x="-2" y="16" width="40" height="12" fill="#bcd9ef"/>
<rect x="-2" y="7" width="6" height="32" fill="#e9e9e6"/>
<rect x="24" y="15" width="14" height="10" fill="#64646b"/>
<rect x="24" y="14" width="8" height="1.6" fill="#e4e4e4"/>
<ellipse cx="22.6" cy="16" rx="2" ry="6.6" fill="#ece2c8"/>
<ellipse cx="19.5" cy="21.6" rx="7.4" ry="4" fill="#e7dcc0"/>
<ellipse cx="16.8" cy="13.4" rx="4.6" ry="6" fill="#4e3e2d"/>
<ellipse cx="18.2" cy="16.6" rx="3.1" ry="4.2" fill="#c89678"/>
<circle cx="16.6" cy="15.2" r="1.3" fill="#1b1411"/>
<circle cx="20" cy="15.2" r="1.3" fill="#1b1411"/>
<path d="M3.5 38 Q5 24.5 12 23.6 L17 26.5 L26 24 Q29.5 27 29.5 38 Z" fill="#123d37"/>
<ellipse cx="20.8" cy="30.8" rx="1.8" ry="1.6" fill="#3f8f86" opacity=".8"/>
<ellipse cx="9" cy="29" rx="3" ry="4" fill="#1e5a52" opacity=".6"/>
</g></svg>
  <svg class="abs" style="left:0;top:0" width="1120" height="880" viewBox="0 0 1120 880">
    <!-- webkul logo -->
    <circle cx="853" cy="28" r="13.7" fill="none" stroke="#e4e4e4" stroke-width="0.9"/>
    <circle cx="853.1" cy="28" r="10.1" fill="#1f47e0"/>
    <path d="M847.6 21.4 V28.6 L853.1 24.2 L858.6 28.6 V21.4" fill="none" stroke="#fff" stroke-width="2" stroke-linejoin="miter"/>
    <text x="846.8" y="33.8" font-family="Liberation Sans, sans-serif" font-size="4.3" font-weight="700" fill="#fff" textLength="13" lengthAdjust="spacingAndGlyphs">Webkul</text>
    <circle cx="863.1" cy="36.9" r="4" fill="#16a34a"/>
    <!-- speaker -->
    <path d="M1053.6 26.3 H1057.5 L1064 21.7 V37.1 L1057.5 32.6 H1053.6 Z" fill="#fff"/>
    <!-- panel icon -->
    <rect x="1099" y="20" width="18" height="18" rx="2.2" fill="none" stroke="#fff" stroke-width="2"/>
    <line x1="1111.2" y1="20" x2="1111.2" y2="38" stroke="#fff" stroke-width="2"/>
    <!-- magnifier -->
    <circle cx="1101.7" cy="89.4" r="5.8" fill="none" stroke="#cdcdcd" stroke-width="2.7"/>
    <line x1="1105.6" y1="93.3" x2="1111.6" y2="99" stroke="#cdcdcd" stroke-width="3"/>
    <!-- block icons -->
    <g fill="none" stroke="#d6082f" stroke-width="2.5">
      <circle cx="1106.8" cy="147.7" r="8.7"/><line x1="1100.6" y1="153.9" x2="1113" y2="141.5"/>
      <circle cx="1106.8" cy="209.7" r="8.7"/><line x1="1100.6" y1="215.9" x2="1113" y2="203.5"/>
      <circle cx="1106.8" cy="271.7" r="8.7"/><line x1="1100.6" y1="277.9" x2="1113" y2="265.5"/>
    </g>
  </svg>
  <div class="abs dot" style="top:158.8px"></div>
  <div class="abs dot" style="top:220.8px"></div>
  <div class="abs dot" style="top:282.8px;background:#16a34a"></div>
<span class="t" style="left:872.40px;top:22.06px;font-size:16px;font-weight:400;color:#e6e6e6;letter-spacing:0.442px;-webkit-text-stroke:0.70px #e6e6e6;">Webkul Chat System</span>
<span class="t" style="left:858.60px;top:87.65px;font-size:14px;font-weight:400;color:#848484;letter-spacing:0.104px;">Search Customer</span>
<span class="t" style="left:886.90px;top:133.66px;font-size:16px;font-weight:400;color:#222;letter-spacing:0.379px;">Greek Miller</span>
<span class="t" style="left:887.00px;top:157.05px;font-size:14px;font-weight:400;color:#848484;letter-spacing:0.200px;">greek@example.com</span>
<span class="t" style="left:886.90px;top:195.66px;font-size:16px;font-weight:400;color:#222;letter-spacing:0.039px;">Alex Kim</span>
<span class="t" style="left:887.00px;top:219.05px;font-size:14px;font-weight:400;color:#848484;letter-spacing:0.265px;">alexkim@example.com</span>
<span class="t" style="left:886.90px;top:257.66px;font-size:16px;font-weight:400;color:#222;letter-spacing:0.304px;">Cherry Smith</span>
<span class="t" style="left:887.00px;top:281.05px;font-size:14px;font-weight:400;color:#848484;letter-spacing:0.372px;">cherrysmith@example.com</span>
</div></div>

</body>
</html>
